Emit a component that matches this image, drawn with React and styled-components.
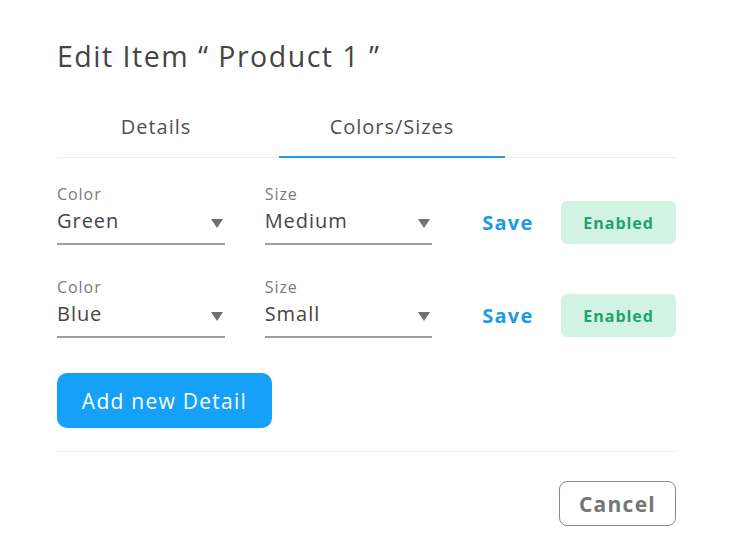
import React from "react";
import styled, { createGlobalStyle } from "styled-components";

const Global = createGlobalStyle`
  html, body { margin: 0; padding: 0; background: #fff; }
  body { font-family: "Open Sans", "Noto Sans", sans-serif; -webkit-font-smoothing: antialiased; letter-spacing: 0.96px; }
  button { letter-spacing: 0.06em; }
  * { box-sizing: border-box; }
`;

const Dialog = styled.div`
  width: 732px;
  height: 560px;
  padding: 34px 56px 0 57px;
  background: #fff;
  display: flex;
  flex-direction: column;
`;

const Title = styled.h1`
  margin: 0;
  font-size: 28.5px;
  font-weight: 500;
  color: #454545;
  line-height: 44px;
  letter-spacing: 1.5px;
`;

const Tabs = styled.div`
  margin-top: 36px;
  display: flex;
  border-bottom: 1px solid #efefef;
`;

const Tab = styled.div`
  width: ${p => p.$w}px;
  padding-right: ${p => p.$pr || 0}px;
  text-align: center;
  font-size: 20px;
  color: #505050;
  padding-bottom: 16px;
  line-height: 26px;
  border-bottom: 2px solid ${p => (p.$active ? "#1e9be9" : "transparent")};
  margin-bottom: -1px;
`;

const Rows = styled.div`
  margin-top: 26px;
  display: flex;
  flex-direction: column;
  gap: 32px;
`;

const Row = styled.div`
  display: flex;
  align-items: flex-end;
`;

const Field = styled.div`
  width: 168px;
  margin-right: ${p => p.$mr}px;
  display: flex;
  flex-direction: column;
`;

const Label = styled.div`
  font-size: 16px;
  color: #7a7a7a;
  line-height: 20px;
`;

const Select = styled.div`
  display: flex;
  align-items: center;
  justify-content: space-between;
  height: 41px;
  padding-right: 2px;
  padding-bottom: 6px;
  border-bottom: 2px solid #9e9e9e;
  font-size: 20px;
  color: #454545;
`;

const Arrow = styled.span`
  width: 0;
  height: 0;
  border-left: 6px solid transparent;
  border-right: 6px solid transparent;
  border-top: 9px solid #707070;
  margin-top: 6px;
`;

const SaveBtn = styled.button`
  border: none;
  background: none;
  padding: 0;
  margin-left: 50px;
  margin-bottom: 9px;
  width: 79px;
  line-height: 26px;
  text-align: left;
  font-family: inherit;
  font-size: 20px;
  font-weight: 700;
  color: #1a9be8;
`;

const StatusBtn = styled.button`
  width: 115px;
  height: 43px;
  border: none;
  border-radius: 6px;
  background: #d2f3e4;
  color: #1da36c;
  font-family: inherit;
  font-size: 16px;
  font-weight: 700;
  margin-bottom: 1px;
`;

const AddBtn = styled.button`
  margin-top: 35px;
  width: 215px;
  height: 55px;
  border: none;
  border-radius: 10px;
  background: #14a1f7;
  color: #fff;
  font-family: inherit;
  font-size: 21px;
  font-weight: 500;
  display: block;
`;

const Divider = styled.div`
  margin-top: 23px;
  height: 1px;
  background: #efefef;
`;

const Footer = styled.div`
  display: flex;
  justify-content: flex-end;
  padding-top: 29px;
`;

const CancelBtn = styled.button`
  width: 117px;
  height: 45px;
  border: 1.5px solid #8a8a8a;
  border-radius: 8px;
  background: #fff;
  color: #757575;
  font-family: inherit;
  font-size: 21px;
  font-weight: 700;
`;

const rows = [
  { color: "Green", size: "Medium" },
  { color: "Blue", size: "Small" },
];

export default function App() {
  return (
    <>
      <Global />
      <Dialog>
        <Title>Edit Item “ Product 1 ”</Title>
        <Tabs>
          <Tab $w={222} $pr={24}>Details</Tab>
          <Tab $w={226} $active>Colors/Sizes</Tab>
        </Tabs>
        <Rows>
          {rows.map((r, i) => (
            <Row key={i}>
              <Field $mr={40}>
                <Label>Color</Label>
                <Select>
                  {r.color}
                  <Arrow />
                </Select>
              </Field>
              <Field $mr={0}>
                <Label>Size</Label>
                <Select>
                  {r.size}
                  <Arrow />
                </Select>
              </Field>
              <SaveBtn>Save</SaveBtn>
              <StatusBtn>Enabled</StatusBtn>
            </Row>
          ))}
        </Rows>
        <div>
          <AddBtn>Add new Detail</AddBtn>
        </div>
        <Divider />
        <Footer>
          <CancelBtn>Cancel</CancelBtn>
        </Footer>
      </Dialog>
    </>
  );
}
